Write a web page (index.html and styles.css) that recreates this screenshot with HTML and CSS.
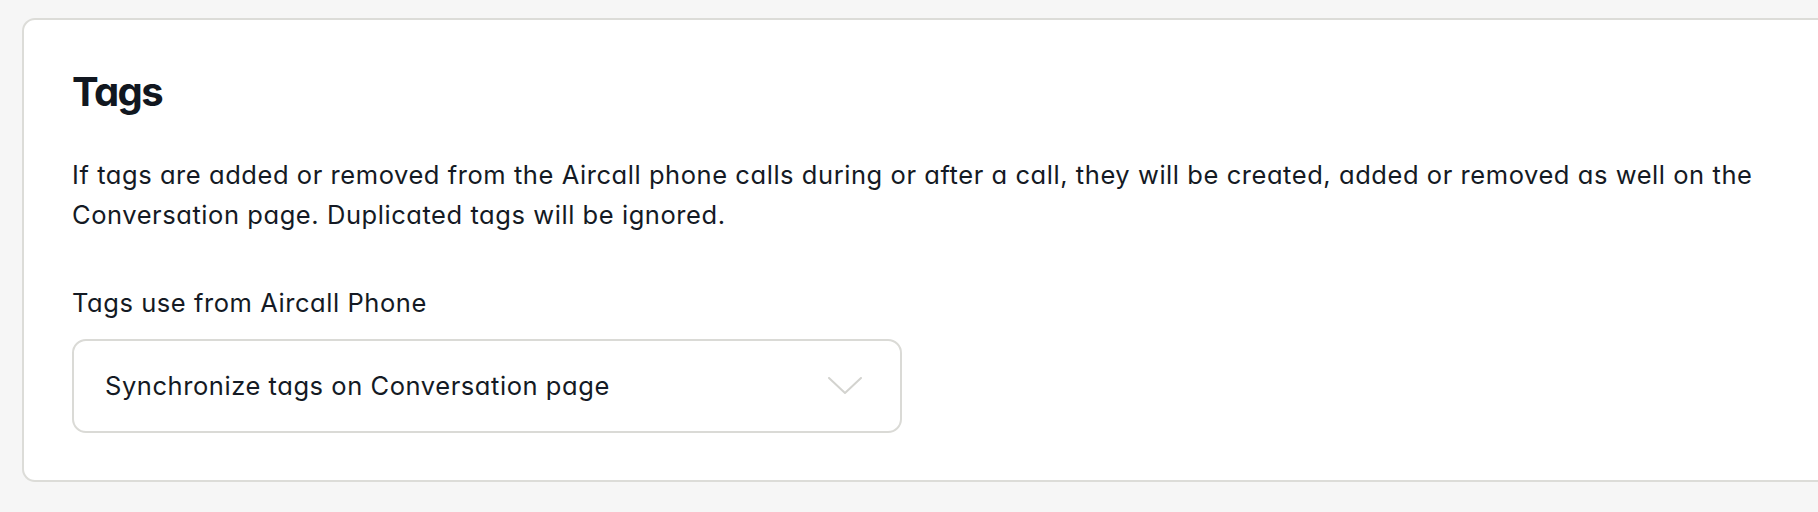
FILE: index.html
```html
<!DOCTYPE html>
<html lang="en">
<head>
<meta charset="utf-8">
<title>Tags</title>
<link rel="stylesheet" href="styles.css">
</head>
<body>
<section class="card">
  <h2 class="card-title">Tags</h2>
  <p class="card-text">If tags are added or removed from the Aircall phone calls during or after a call, they will be created, added or removed as well on the Conversation page. Duplicated tags will be ignored.</p>
  <div class="field">
    <label class="field-label">Tags use from Aircall Phone</label>
    <div class="select">
      <span class="select-value">Synchronize tags on Conversation page</span>
      <svg class="select-chevron" width="34" height="18" viewBox="0 0 34 18" aria-hidden="true">
        <path d="M1 1 L17 16 L33 1" fill="none" stroke="#d3d3cf" stroke-width="2" stroke-linecap="round" stroke-linejoin="round"/>
      </svg>
    </div>
  </div>
</section>
</body>
</html>
```
FILE: styles.css
```css
html, body {
  margin: 0;
  padding: 0;
  background: #f6f6f6;
  overflow: hidden;
}
body {
  font-family: Inter, "Noto Sans", sans-serif;
  font-feature-settings: "cv11" 1;
  color: #141a24;
  padding: 18px 0 0 22px;
}
.card {
  width: 1900px;
  box-sizing: border-box;
  background: #ffffff;
  border: 2px solid #dcdcd8;
  border-radius: 13px;
  padding: 48px 48px 47px 48px;
}
.card-title {
  margin: 0;
  font-size: 40px;
  line-height: 48px;
  font-weight: 700;
  letter-spacing: -1.6px;
  color: #111720;
}
.card-text {
  margin: 39px 0 0;
  width: 1720px;
  font-size: 25.5px;
  line-height: 40px;
  font-weight: 400;
  letter-spacing: 0.56px;
}
.field {
  margin-top: 53px;
  display: flex;
  flex-direction: column;
  gap: 21px;
}
.field-label {
  font-size: 25.5px;
  line-height: 30px;
  letter-spacing: 0.56px;
}
.select {
  width: 830px;
  height: 94px;
  box-sizing: border-box;
  border: 2px solid #dadad6;
  border-radius: 14px;
  display: flex;
  align-items: center;
  justify-content: space-between;
  padding: 0 38px 0 31px;
}
.select-value {
  font-size: 25.5px;
  line-height: 30px;
  letter-spacing: 0.56px;
}
.select-chevron {
  display: block;
}
```
